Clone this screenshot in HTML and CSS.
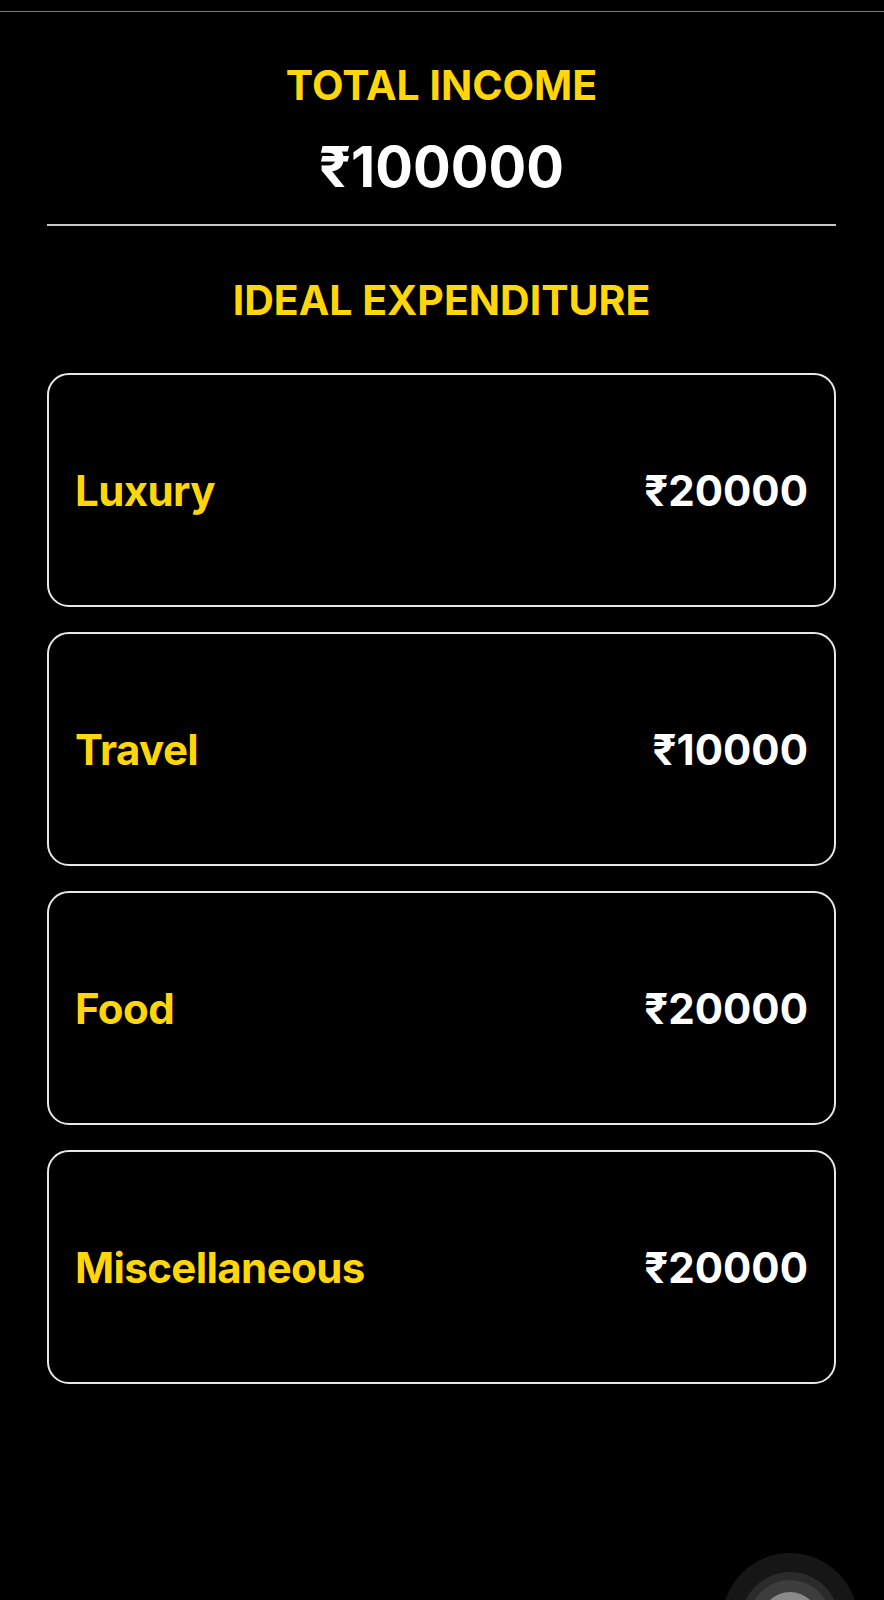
FILE: index.html
```html
<!DOCTYPE html>
<html lang="en">
<head>
<meta charset="utf-8">
<title>Income</title>
<link rel="stylesheet" href="styles.css">
</head>
<body>
<div class="topline"></div>
<main class="page">
  <section class="income">
    <h1 class="heading">TOTAL INCOME</h1>
    <div class="total">₹100000</div>
  </section>
  <hr class="divider">
  <h2 class="heading subheading">IDEAL EXPENDITURE</h2>
  <ul class="cards">
    <li class="card"><span class="label">Luxury</span><span class="value">₹20000</span></li>
    <li class="card"><span class="label">Travel</span><span class="value">₹10000</span></li>
    <li class="card"><span class="label">Food</span><span class="value">₹20000</span></li>
    <li class="card"><span class="label">Miscellaneous</span><span class="value">₹20000</span></li>
  </ul>
</main>
<div class="assistive-clip">
  <div class="assistive">
    <div class="ring ring2"></div>
    <div class="ring ring3"></div>
    <div class="ring core"></div>
  </div>
</div>
</body>
</html>
```
FILE: styles.css
```css
* { box-sizing: border-box; }
html, body {
  margin: 0;
  padding: 0;
  background: #000;
}
body {
  width: 884px;
  height: 1600px;
  overflow: hidden;
  position: relative;
  font-family: Inter, "Liberation Sans", "DejaVu Sans", sans-serif;
  color: #fff;
}
.topline {
  margin-top: 11px;
  height: 1px;
  background: #7a7a7a;
}
.page {
  padding: 0 48px 0 47px;
  display: flex;
  flex-direction: column;
}
.income {
  display: flex;
  flex-direction: column;
  align-items: center;
  padding-top: 48px;
}
.heading {
  margin: 0;
  font-size: 41px;
  line-height: 50px;
  font-weight: 700;
  color: #FFD60A;
  text-align: center;
  letter-spacing: 0;
}
.total {
  margin-top: 24px;
  font-size: 56px;
  line-height: 66px;
  font-weight: 700;
  color: #fff;
}
.divider {
  margin: 24px 0 0;
  border: 0;
  height: 2px;
  background: #c9c9c9;
}
.subheading {
  margin-top: 49px;
}
.cards {
  list-style: none;
  margin: 48px 0 0;
  padding: 0;
  display: flex;
  flex-direction: column;
  gap: 25px;
}
.card {
  height: 234px;
  border: 2px solid #e8e8e8;
  border-radius: 22px;
  padding: 0 26px;
  display: flex;
  align-items: center;
  justify-content: space-between;
  font-size: 42px;
  font-weight: 700;
}
.label { color: #FFD60A; letter-spacing: -0.6px; }
.value { color: #fff; }
.assistive-clip {
  position: absolute;
  left: 722px;
  top: 1553px;
  width: 136px;
  height: 47px;
  overflow: hidden;
}
.assistive {
  position: relative;
  width: 136px;
  height: 136px;
  border-radius: 50%;
  background: #161616;
}
.ring {
  position: absolute;
  border-radius: 50%;
  left: 50%;
  top: 50%;
  transform: translate(-50%, -50%);
}
.ring2 { width: 98px; height: 98px; background: #2b2b2b; }
.ring3 { width: 82px; height: 82px; background: #3d3d3d; }
.core { width: 58px; height: 58px; background: #8a8a8a; }
```
